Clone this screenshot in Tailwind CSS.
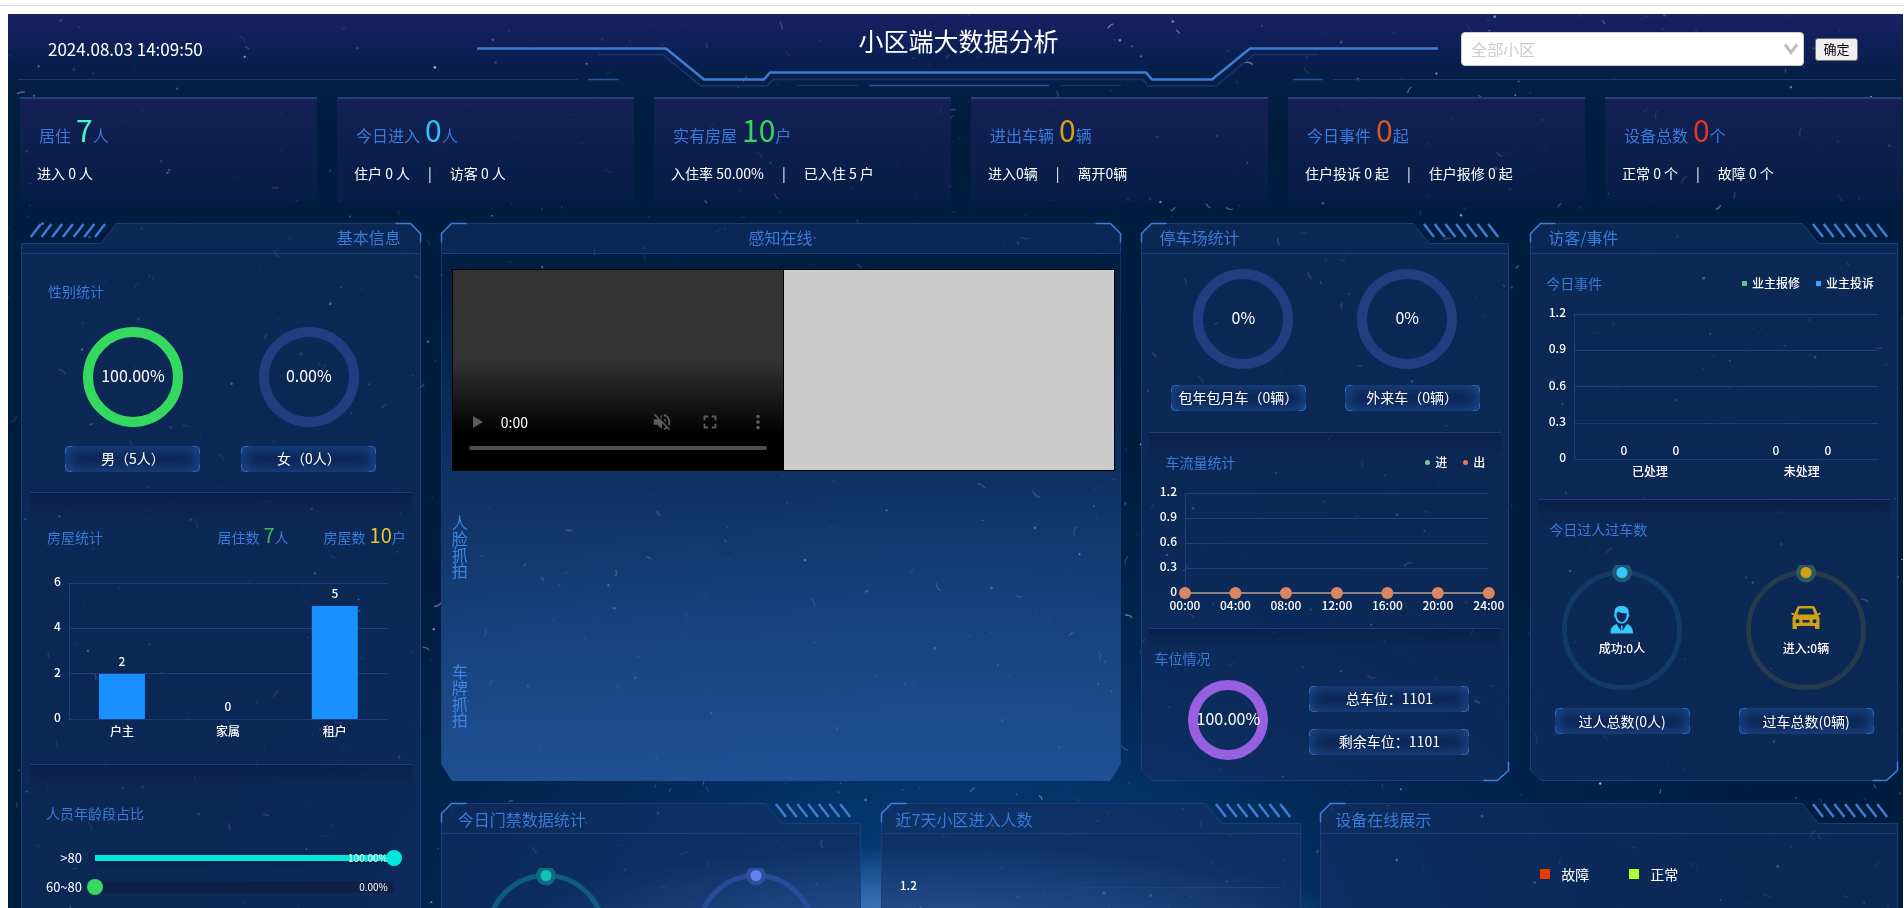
<!DOCTYPE html>
<html lang="zh-CN">
<head>
<meta charset="utf-8">
<title>小区端大数据分析</title>
<script src="https://cdn.jsdelivr.net/npm/@tailwindcss/browser@4"></script>
</head>
<body class="bg-white">
<div class="flex h-screen flex-col overflow-hidden font-['Noto_Sans_CJK_SC',sans-serif] text-white">
<div class="mb-2 h-[6px] shrink-0 border-b border-[#dddddd]"></div>
<main class="relative isolate mr-px ml-2 flex-1 overflow-hidden bg-[#001d40] bg-[radial-gradient(ellipse_22%_9%_at_49%_102%,#4a86c4_0%,#2f68ad_40%,transparent_100%),radial-gradient(ellipse_42%_55%_at_51%_105%,#05468a_0%,#04356a80_55%,transparent_100%),linear-gradient(to_bottom,#1a2064_0px,#10205a_25px,#061f49_60px,transparent_100px)]">
<canvas id="dust" class="absolute inset-0 -z-10 h-full w-full" aria-hidden="true"></canvas>

<header class="relative grid h-[83px] grid-cols-[1fr_auto_1fr] items-start pt-[18px]">
  <svg class="absolute inset-0 -z-10 h-[83px] w-full" viewBox="8 14 1895 83" preserveAspectRatio="none" fill="none" aria-hidden="true">
    <path d="M598 54.5H663L701 86H767L773 79.5H1143L1148 86H1216L1254 54.5H1319" stroke="#1b3570" stroke-width="1.5"/>
    <path d="M477 48.5H666L704 79.5H764L770 72.5H1146L1152 79.5H1212L1250 48.5H1438" stroke="#3f7cd3" stroke-width="2.5"/>
    <path d="M18 79.5H578M1333 79.5H1896M797 85.5H858M1060 85.5H1121" stroke="#1b3a70"/>
    <path d="M588 79.5H619M1293 79.5H1323M869 85.5H1049" stroke="#2b52a0" stroke-width="1.5"/>
  </svg>
  <time class="pl-10 text-[17px] leading-[34px]">2024.08.03 14:09:50</time>
  <h1 class="pl-[6px] text-[25px] leading-4">小区端大数据分析</h1>
  <div class="flex items-center justify-end gap-[11px] pr-[45px]">
    <label class="relative block w-[343px]">
      <span class="sr-only">小区</span>
      <select class="h-[34px] w-full appearance-none rounded border border-[#cccccc] bg-white pl-[9px] text-base leading-none text-[#cccccc]"><option>全部小区</option></select>
      <svg class="pointer-events-none absolute top-[10px] right-[5px] h-[14px] w-[16px]" viewBox="0 0 16 14" fill="none" stroke="#bdbdbd" stroke-width="3" aria-hidden="true"><path d="M2 2.500L8 10.500L14 2.500"/></svg>
    </label>
    <button class="h-[23px] w-[43px] rounded-[3px] border border-[#767676] bg-[#efefef] text-[13px] leading-5 text-black">确定</button>
  </div>
</header>

<section class="grid grid-cols-6 gap-5 pr-px pl-3" aria-label="概览">
  <article class="h-[104px] border-t-2 border-[#22407c] bg-linear-to-b from-[#182158]/85 to-[#0b1f4e]/50 pt-3 pl-[17px]">
    <p class="flex items-baseline gap-[5px] pl-0.5 text-base leading-9 text-[#3b7ad6]">居住<span class="flex items-baseline"><b class="text-[30px] font-normal text-[#42f5c4]">7</b>人</span></p>
    <p class="mt-[10px] text-sm leading-5">进入 0 人</p>
  </article>
  <article class="h-[104px] border-t-2 border-[#22407c] bg-linear-to-b from-[#182158]/85 to-[#0b1f4e]/50 pt-3 pl-[17px]">
    <p class="flex items-baseline gap-[5px] pl-0.5 text-base leading-9 text-[#3b7ad6]">今日进入<span class="flex items-baseline"><b class="text-[30px] font-normal text-[#35c2fc]">0</b>人</span></p>
    <p class="mt-[10px] flex gap-[18px] text-sm leading-5"><span>住户 0 人</span><span>|</span><span>访客 0 人</span></p>
  </article>
  <article class="h-[104px] border-t-2 border-[#22407c] bg-linear-to-b from-[#182158]/85 to-[#0b1f4e]/50 pt-3 pl-[17px]">
    <p class="flex items-baseline gap-[5px] pl-0.5 text-base leading-9 text-[#3b7ad6]">实有房屋<span class="flex items-baseline"><b class="text-[30px] font-normal text-[#36d660]">10</b>户</span></p>
    <p class="mt-[10px] flex gap-[18px] text-sm leading-5"><span>入住率 50.00%</span><span>|</span><span>已入住 5 户</span></p>
  </article>
  <article class="h-[104px] border-t-2 border-[#22407c] bg-linear-to-b from-[#182158]/85 to-[#0b1f4e]/50 pt-3 pl-[17px]">
    <p class="flex items-baseline gap-[5px] pl-0.5 text-base leading-9 text-[#3b7ad6]">进出车辆<span class="flex items-baseline"><b class="text-[30px] font-normal text-[#d0a120]">0</b>辆</span></p>
    <p class="mt-[10px] flex gap-[18px] text-sm leading-5"><span>进入0辆</span><span>|</span><span>离开0辆</span></p>
  </article>
  <article class="h-[104px] border-t-2 border-[#22407c] bg-linear-to-b from-[#182158]/85 to-[#0b1f4e]/50 pt-3 pl-[17px]">
    <p class="flex items-baseline gap-[5px] pl-0.5 text-base leading-9 text-[#3b7ad6]">今日事件<span class="flex items-baseline"><b class="text-[30px] font-normal text-[#cf5a26]">0</b>起</span></p>
    <p class="mt-[10px] flex gap-[18px] text-sm leading-5"><span>住户投诉 0 起</span><span>|</span><span>住户报修 0 起</span></p>
  </article>
  <article class="h-[104px] border-t-2 border-[#22407c] bg-linear-to-b from-[#182158]/85 to-[#0b1f4e]/50 pt-3 pl-[17px]">
    <p class="flex items-baseline gap-[5px] pl-0.5 text-base leading-9 text-[#3b7ad6]">设备总数<span class="flex items-baseline"><b class="text-[30px] font-normal text-[#e23620]">0</b>个</span></p>
    <p class="mt-[10px] flex gap-[18px] text-sm leading-5"><span>正常 0 个</span><span>|</span><span>故障 0 个</span></p>
  </article>
</section>

<div class="mt-[22px] grid grid-cols-[400fr_1458fr] gap-5 pr-[5px] pl-[13px]">

  <section class="relative isolate pb-40" data-frame="mirror">
    <h2 class="pr-5 text-right text-base leading-7 text-[#3b7ad6]">基本信息</h2>
    <h3 class="mt-[30px] pl-[27px] text-sm leading-5 text-[#3b7ad6]">性别统计</h3>
    <div class="mt-[26px] grid grid-cols-2 justify-items-center px-6">
      <div class="flex size-[100px] items-center justify-center rounded-full border-[10px] border-[#36d960] pb-1 text-base"><span>100.00%</span></div>
      <div class="flex size-[100px] items-center justify-center rounded-full border-[10px] border-[#243d80] pb-1 text-base"><span>0.00%</span></div>
    </div>
    <div class="mt-[19px] grid grid-cols-2 justify-items-center px-6">
      <div class="relative isolate h-[26px] w-[135px] rounded-[3px] bg-[#0b2452] text-center text-sm leading-6 shadow-[inset_0_0_14px_3px_#1c4a8e]" data-frame="chip">男（5人）</div>
      <div class="relative isolate h-[26px] w-[135px] rounded-[3px] bg-[#0b2452] text-center text-sm leading-6 shadow-[inset_0_0_14px_3px_#1c4a8e]" data-frame="chip">女（0人）</div>
    </div>

    <div class="mx-[9px] mt-5 -mb-6 h-6 border-t border-[#223d82] bg-linear-to-b from-[#08193c]/50 to-transparent"></div>
    <div class="flex items-end pt-[33px] pr-[15px] pl-[26px] text-sm leading-5 text-[#3b7ad6]">
      <h3 class="mr-auto">房屋统计</h3>
      <p class="flex items-baseline gap-1">居住数<span class="flex items-baseline"><b class="text-xl leading-5 font-normal text-[#38c060]">7</b>人</span></p>
      <p class="ml-[35px] flex items-baseline gap-1">房屋数<span class="flex items-baseline"><b class="text-xl leading-5 font-normal text-[#efc32b]">10</b>户</span></p>
    </div>
    <svg class="mt-[13px] block h-[185px] w-full font-medium" viewBox="21 560 400 185" font-size="12" fill="#ffffff">
      <path d="M69 583.500H388M69 628.500H388M69 673.500H388M69 719.500H388M69.500 583V719M122.500 719V724M228.500 719V724M335.500 719V724" stroke="#243d80" fill="none"/>
      <path d="M99 674H145V719H99ZM312 606H358V719H312Z" fill="#1890ff"/>
      <g text-anchor="end"><text x="61" y="586">6</text><text x="61" y="631">4</text><text x="61" y="677">2</text><text x="61" y="722">0</text></g>
      <g text-anchor="middle"><text x="122" y="666">2</text><text x="228" y="711">0</text><text x="335" y="598">5</text><text x="122" y="736">户主</text><text x="228" y="736">家属</text><text x="335" y="736">租户</text></g>
    </svg>

    <div class="mx-[9px] mt-[19px] -mb-6 h-6 border-t border-[#223d82] bg-linear-to-b from-[#08193c]/50 to-transparent"></div>
    <h3 class="pt-[39px] pl-[25px] text-sm leading-5 text-[#3b7ad6]">人员年龄段占比</h3>
    <ul class="mt-5">
      <li class="flex h-[29px] items-center pr-[27px]">
        <span class="w-[61px] text-right text-[13px] leading-5">&gt;80</span>
        <div class="relative ml-[13px] flex h-[6px] flex-1 items-center bg-[#00e8dc] shadow-[0_0_5px_#061a38]">
          <span class="absolute right-[6px] text-[10px] leading-3">100.00%</span>
          <span class="absolute -right-2 size-4 rounded-full bg-[#00e8dc]"></span>
        </div>
      </li>
      <li class="flex h-[29px] items-center pr-[27px]">
        <span class="w-[61px] text-right text-[13px] leading-5">60~80</span>
        <div class="relative ml-[13px] flex h-3 flex-1 items-center rounded bg-[#0f2148]">
          <span class="absolute right-[6px] text-[10px] leading-3">0.00%</span>
          <span class="absolute -left-2 size-4 rounded-full bg-[#36d960]"></span>
        </div>
      </li>
    </ul>
  </section>

  <div class="flex flex-col gap-[22px]">
    <div class="grid grid-cols-[680fr_368fr_368fr] gap-[21px]">

      <section class="relative isolate" data-frame="center">
        <h2 class="text-center text-base leading-7 text-[#3b7ad6]">感知在线</h2>
        <div class="mt-[18px] mr-[5px] ml-[11px] grid h-[202px] grid-cols-2 gap-px border border-black bg-black">
          <div class="flex flex-col justify-end bg-[#333333] bg-linear-to-t from-black from-18% to-transparent to-55% px-4 pb-5 text-[#5c5c5c]">
            <div class="flex items-center text-sm leading-5 text-white">
              <button class="text-[#5c5c5c]" aria-label="播放"><svg class="block size-5" viewBox="0 0 20 20" fill="currentColor"><path d="M4 4V16L14 10Z"/></svg></button>
              <span class="mr-auto ml-3">0:00</span>
              <button class="text-[#5c5c5c]" aria-label="静音"><svg class="block size-[22px]" viewBox="0 0 24 24" fill="currentColor"><path d="M16.500 12c0-1.770-1.020-3.290-2.500-4.030v2.210l2.450 2.450c.03-.2.05-.41.05-.63zm2.500 0c0 .94-.2 1.820-.54 2.640l1.510 1.510C20.630 14.910 21 13.500 21 12c0-4.280-2.990-7.860-7-8.770v2.060c2.890.86 5 3.540 5 6.710zM4.270 3L3 4.270 7.730 9H3v6h4l5 5v-6.730l4.250 4.250c-.67.52-1.420.93-2.250 1.180v2.060c1.380-.31 2.630-.95 3.690-1.810L19.730 21 21 19.730l-9-9L4.270 3zM12 4L9.910 6.090 12 8.180V4z"/></svg></button>
              <button class="ml-[26px] text-[#5c5c5c]" aria-label="全屏"><svg class="block size-[22px]" viewBox="0 0 24 24" fill="currentColor"><path d="M7 14H5v5h5v-2H7v-3zm-2-4h2V7h3V5H5v5zm12 7h-3v2h5v-5h-2v3zM14 5v2h3v3h2V5h-5z"/></svg></button>
              <button class="-mr-0.5 ml-[26px] text-[#5c5c5c]" aria-label="更多"><svg class="block size-[22px]" viewBox="0 0 24 24" fill="currentColor"><path d="M12 8c1.100 0 2-.9 2-2s-.9-2-2-2-2 .9-2 2 .9 2 2 2zm0 2c-1.100 0-2 .9-2 2s.9 2 2 2 2-.9 2-2-.9-2-2-2zm0 6c-1.100 0-2 .9-2 2s.9 2 2 2 2-.9 2-2-.9-2-2-2z"/></svg></button>
            </div>
            <div class="mt-[13px] h-1 rounded-full bg-[#4f4f4f]"></div>
          </div>
          <div class="bg-[#cccccc]"></div>
        </div>
        <div class="mt-[43px] flex flex-col gap-[85px] pb-[54px] pl-[11px] text-base leading-4 text-[#4384e0]">
          <h3 class="w-4">人脸抓拍</h3>
          <h3 class="w-4">车牌抓拍</h3>
        </div>
      </section>

      <section class="relative isolate" data-frame="full">
        <h2 class="pl-[18px] text-base leading-7 text-[#3b7ad6]">停车场统计</h2>
        <div class="mt-[18px] grid grid-cols-2 justify-items-center px-5">
          <div class="flex size-[100px] items-center justify-center rounded-full border-[10px] border-[#243d80] pb-1 text-base">0%</div>
          <div class="flex size-[100px] items-center justify-center rounded-full border-[10px] border-[#243d80] pb-1 text-base">0%</div>
        </div>
        <div class="mt-4 grid grid-cols-2 justify-items-center px-[10px]">
          <div class="relative isolate h-[26px] w-[135px] rounded-[3px] bg-[#0b2452] text-center text-sm leading-6 shadow-[inset_0_0_14px_3px_#1c4a8e]" data-frame="chip">包年包月车（0辆）</div>
          <div class="relative isolate h-[26px] w-[135px] rounded-[3px] bg-[#0b2452] text-center text-sm leading-6 shadow-[inset_0_0_14px_3px_#1c4a8e]" data-frame="chip">外来车（0辆）</div>
        </div>
        <div class="mx-2 mt-[21px] -mb-6 h-6 border-t border-[#223d82] bg-linear-to-b from-[#08193c]/50 to-transparent"></div>
        <div class="flex items-center pt-5 pr-6 pl-6">
          <h3 class="mr-auto text-sm leading-5 text-[#3b7ad6]">车流量统计</h3>
          <span class="flex items-center gap-[5px] text-xs font-medium"><i class="size-[5px] rounded-full bg-[#7cc6a4]"></i>进</span>
          <span class="ml-4 flex items-center gap-[5px] text-xs font-medium"><i class="size-[5px] rounded-full bg-[#d88060]"></i>出</span>
        </div>
        <svg class="mt-[6px] block h-[140px] w-full font-medium" viewBox="1142 478 368 140" font-size="12" fill="#ffffff">
          <path d="M1186 493.500H1490M1186 518.500H1490M1186 543.500H1490M1186 568.500H1490M1186.500 493V593" stroke="#243d80" fill="none"/>
          <path d="M1186 593H1490" stroke="#8a8284" stroke-width="2"/>
          <g fill="#d98762"><circle cx="1186" cy="593" r="6"/><circle cx="1236.500" cy="593" r="6"/><circle cx="1287" cy="593" r="6"/><circle cx="1338" cy="593" r="6"/><circle cx="1388.500" cy="593" r="6"/><circle cx="1439" cy="593" r="6"/><circle cx="1490" cy="593" r="6"/></g>
          <g text-anchor="end"><text x="1178" y="496">1.2</text><text x="1178" y="521">0.9</text><text x="1178" y="546">0.6</text><text x="1178" y="571">0.3</text><text x="1178" y="596">0</text></g>
          <g text-anchor="middle"><text x="1186" y="610">00:00</text><text x="1236.500" y="610">04:00</text><text x="1287" y="610">08:00</text><text x="1338" y="610">12:00</text><text x="1388.500" y="610">16:00</text><text x="1439" y="610">20:00</text><text x="1490" y="610">24:00</text></g>
        </svg>
        <div class="mx-2 mt-[10px] -mb-6 h-6 border-t border-[#223d82] bg-linear-to-b from-[#08193c]/50 to-transparent"></div>
        <h3 class="pt-5 pl-[13px] text-sm leading-5 text-[#3b7ad6]">车位情况</h3>
        <div class="mt-3 flex items-center gap-[41px] pl-[47px]">
          <div class="flex size-20 items-center justify-center rounded-full border-[10px] border-[#9760e0] pb-1 text-base"><span>100.00%</span></div>
          <div class="flex flex-col gap-[17px]">
            <div class="relative isolate h-[26px] w-40 rounded-[3px] bg-[#0b2452] text-center text-sm leading-6 shadow-[inset_0_0_14px_3px_#1c4a8e]" data-frame="chip">总车位：1101</div>
            <div class="relative isolate h-[26px] w-40 rounded-[3px] bg-[#0b2452] text-center text-sm leading-6 shadow-[inset_0_0_14px_3px_#1c4a8e]" data-frame="chip">剩余车位：1101</div>
          </div>
        </div>
      </section>

      <section class="relative isolate" data-frame="full">
        <h2 class="pl-[18px] text-base leading-7 text-[#3b7ad6]">访客/事件</h2>
        <div class="mt-[22px] flex items-center pr-6 pl-4">
          <h3 class="mr-auto text-sm leading-5 text-[#3b7ad6]">今日事件</h3>
          <span class="flex items-center gap-[5px] text-xs font-medium"><i class="size-[5px] bg-[#5cc488]"></i>业主报修</span>
          <span class="ml-4 flex items-center gap-[5px] text-xs font-medium"><i class="size-[5px] bg-[#3ea0ff]"></i>业主投诉</span>
        </div>
        <svg class="mt-[7px] block h-[185px] w-full font-medium" viewBox="1531 300 368 185" font-size="12" fill="#ffffff">
          <path d="M1575 314.500H1879M1575 350.500H1879M1575 386.500H1879M1575 423.500H1879M1575 459.500H1879M1575.500 314V459" stroke="#243d80" fill="none"/>
          <g text-anchor="end"><text x="1567" y="317">1.2</text><text x="1567" y="353">0.9</text><text x="1567" y="390">0.6</text><text x="1567" y="426">0.3</text><text x="1567" y="462">0</text></g>
          <g text-anchor="middle"><text x="1625" y="455">0</text><text x="1677" y="455">0</text><text x="1777" y="455">0</text><text x="1829" y="455">0</text><text x="1651" y="476">已处理</text><text x="1803" y="476">未处理</text></g>
        </svg>
        <div class="mx-2 mt-[14px] -mb-6 h-6 border-t border-[#223d82] bg-linear-to-b from-[#08193c]/50 to-transparent"></div>
        <h3 class="pt-5 pl-[19px] text-sm leading-5 text-[#3b7ad6]">今日过人过车数</h3>
        <div class="mt-[26px] grid grid-cols-2 justify-items-center">
          <svg class="block h-[125px] w-[120px] font-medium" viewBox="0 0 120 125" font-size="12">
            <circle cx="60" cy="65" r="57.500" fill="none" stroke="#123c66" stroke-width="5"/>
            <circle cx="60" cy="7.500" r="10" fill="#1e5874"/><circle cx="60" cy="7.500" r="5.500" fill="#36c8fc"/>
            <g fill="#36c8fc"><path d="M52.600 49C52 43.600 54.500 41 59.500 41C64.600 41 67.200 43.600 66.800 49C67.700 50 67.400 52 66.300 52.600C65.400 56.500 62.800 58.800 59.700 58.800C56.500 58.800 54 56.500 53.200 52.600C52 52 51.700 50 52.600 49ZM54.600 48.300C54.200 53 56.700 57 59.700 57C62.800 57 65.100 53 64.700 48.300C61 48.600 57.500 47.800 56.500 46.500Z" fill-rule="evenodd"/><path d="M48.500 68.500C48.500 63.500 50 60.800 54.500 59L59.200 66L59 60.500H60.600L60.400 66L65 59C69.500 60.800 71 63.500 71 68.500Z"/></g>
            <text x="60" y="88" text-anchor="middle" fill="#ffffff">成功:0人</text>
          </svg>
          <svg class="block h-[125px] w-[120px] font-medium" viewBox="0 0 120 125" font-size="12">
            <circle cx="60" cy="65" r="57.500" fill="none" stroke="#263b4c" stroke-width="5"/>
            <circle cx="60" cy="7.500" r="10" fill="#2e5862"/><circle cx="60" cy="7.500" r="5.500" fill="#cfa116"/>
            <path fill="#cfa116" fill-rule="evenodd" d="M51 42.500C51.500 41.500 52.300 41 53.500 41H66.500C67.700 41 68.500 41.500 69 42.500L71.500 48.500L74.500 47.500V49.500L72 50.500C73.300 51.500 73.500 52.500 73.500 54V64H69V61H51V64H46.500V54C46.500 52.500 46.700 51.500 48 50.500L45.500 49.500V47.500L48.500 48.500ZM53.500 43.500L51.500 49.500H68.500L66.500 43.500ZM51.500 54.200A2 2 0 1 0 51.500 58.200A2 2 0 1 0 51.500 54.200ZM68.500 54.200A2 2 0 1 0 68.500 58.200A2 2 0 1 0 68.500 54.200ZM56.500 55H63.500V57.500H56.500Z"/>
            <text x="60" y="88" text-anchor="middle" fill="#ffffff">进入:0辆</text>
          </svg>
        </div>
        <div class="mt-[18px] grid grid-cols-2 justify-items-center pb-[46px]">
          <div class="relative isolate h-[26px] w-[135px] rounded-[3px] bg-[#0b2452] text-center text-sm leading-[26px] shadow-[inset_0_0_14px_3px_#1c4a8e]" data-frame="chip">过人总数(0人)</div>
          <div class="relative isolate h-[26px] w-[135px] rounded-[3px] bg-[#0b2452] text-center text-sm leading-[26px] shadow-[inset_0_0_14px_3px_#1c4a8e]" data-frame="chip">过车总数(0辆)</div>
        </div>
      </section>
    </div>

    <div class="grid grid-cols-[420fr_420fr_578fr] gap-5">
      <section class="relative isolate pb-16" data-frame="full">
        <h2 class="pt-px pl-[17px] text-base leading-[30px] text-[#3b7ad6]">今日门禁数据统计</h2>
        <div class="mt-[34px] grid grid-cols-2 justify-items-center">
          <svg class="block h-[125px] w-[120px]" viewBox="0 0 120 125"><circle cx="60" cy="65" r="57.500" fill="none" stroke="#0e5c7e" stroke-width="5"/><circle cx="60" cy="7.500" r="10" fill="#0e6a80"/><circle cx="60" cy="7.500" r="5.500" fill="#14c2b8"/></svg>
          <svg class="block h-[125px] w-[120px]" viewBox="0 0 120 125"><circle cx="60" cy="65" r="57.500" fill="none" stroke="#264c98" stroke-width="5"/><circle cx="60" cy="7.500" r="10" fill="#2f4f9e"/><circle cx="60" cy="7.500" r="5.500" fill="#6283f0"/></svg>
        </div>
      </section>
      <section class="relative isolate" data-frame="full">
        <h2 class="pt-px pl-[15px] text-base leading-[30px] text-[#3b7ad6]">近7天小区进入人数</h2>
        <svg class="mt-[34px] block h-[125px] w-full font-medium" viewBox="881 868 420 125" font-size="12" fill="#ffffff">
          <path d="M925 887.500H1280M925.500 887V993M925 923.500H1280M925 959.500H1280" stroke="#23417f" fill="none"/>
          <text x="917" y="890" text-anchor="end">1.2</text>
        </svg>
      </section>
      <section class="relative isolate" data-frame="full">
        <h2 class="pt-px pl-[15px] text-base leading-[30px] text-[#3b7ad6]">设备在线展示</h2>
        <div class="mt-[30px] flex items-center justify-center gap-10 text-sm leading-5">
          <span class="flex items-center gap-[11px]"><i class="size-[10px] bg-[#e83a06]"></i>故障</span>
          <span class="flex items-center gap-[11px]"><i class="size-[10px] bg-[#adff2f]"></i>正常</span>
        </div>
      </section>
    </div>
  </div>
</div>
</main>
</div>

<script>
// Panel frames: chamfered outline, header rule, bright corners and hatch marks, redrawn on resize.
const NS = 'http://www.w3.org/2000/svg';
function path(svg, d, attrs) {
  const p = document.createElementNS(NS, 'path');
  p.setAttribute('d', d);
  for (const k in attrs) p.setAttribute(k, attrs[k]);
  svg.appendChild(p);
}
function drawFrame(el) {
  const w = Math.round(el.clientWidth) - 1, h = Math.round(el.clientHeight);
  let svg = el.querySelector(':scope > svg[data-bg]');
  if (!svg) {
    svg = document.createElementNS(NS, 'svg');
    svg.setAttribute('data-bg', '');
    svg.setAttribute('aria-hidden', 'true');
    svg.setAttribute('style', 'position:absolute;left:0;top:0;z-index:-1;overflow:visible');
    el.prepend(svg);
  }
  svg.setAttribute('width', w + 1);
  svg.setAttribute('height', h);
  svg.replaceChildren();
  const kind = el.dataset.frame;
  const line = { fill: 'none', stroke: '#1f3c7c', 'stroke-width': 1, transform: 'translate(.5 .5)' };
  const hi = { fill: 'none', stroke: '#3f80dc', 'stroke-width': 1.5, transform: 'translate(.5 .5)' };
  if (kind === 'chip') {
    const c = h - 1;
    path(svg, `M0 7V3L3 0H7M${w - 7} 0H${w - 3}L${w} 3V7M${w} ${c - 7}V${c - 3}L${w - 3} ${c}H${w - 7}M7 ${c}H3L0 ${c - 3}V${c - 7}`, { fill: 'none', stroke: '#2f66b4', transform: 'translate(.5 .5)' });
    return;
  }
  if (kind === 'center') {
    const g = document.createElementNS(NS, 'linearGradient');
    g.id = 'stage';
    g.setAttribute('x1', 0); g.setAttribute('x2', 0); g.setAttribute('y1', 0); g.setAttribute('y2', 1);
    for (const [o, a] of [[0, 0.02], [0.45, 0.42], [1, 0.95]]) {
      const s = document.createElementNS(NS, 'stop');
      s.setAttribute('offset', o); s.setAttribute('stop-color', '#215298'); s.setAttribute('stop-opacity', a);
      g.appendChild(s);
    }
    svg.appendChild(g);
    path(svg, `M0 31H${w + 1}V${h - 17}L${w - 10} ${h}H11L0 ${h - 17}Z`, { fill: 'url(#stage)' });
    path(svg, `M0 10L10 0H${w - 10}L${w} 10V30H0Z`, { ...line, fill: '#0e2b5e', 'fill-opacity': 0.75 });
    path(svg, `M0 31V${h - 17}M${w} 31V${h - 17}`, { ...line, 'stroke-opacity': 0.6 });
    path(svg, `M0 19V10L10 0H25M${w - 25} 0H${w - 10}L${w} 10V19`, hi);
    return;
  }
  const x = kind === 'mirror' ? v => w - v : v => v;
  const b = h - 1;
  const outline = `M${x(0)} 10L${x(10)} 0H${x(w - 95)}L${x(w - 79)} 20H${x(w)}V${b - 10}L${x(w - 11)} ${b}H${x(11)}L${x(0)} ${b - 10}Z`;
  path(svg, outline, { ...line, fill: '#132e62', 'fill-opacity': 0.62 });
  path(svg, `M${x(0)} 30H${x(w)}`, line);
  path(svg, `M${x(0)} 19V10L${x(10)} 0H${x(25)}M${x(w - 25)} ${b}H${x(w - 11)}L${x(w)} ${b - 10}V${b - 19}`, hi);
  let d = '';
  for (let i = 0; i < 7; i++) {
    const s = w - 84 + i * 10.7;
    d += `M${x(s)} 1L${x(s + 10)} 14`;
  }
  path(svg, d, { fill: 'none', stroke: '#3f7cd3', 'stroke-width': 2.5 });
}
const ro = new ResizeObserver(list => list.forEach(e => drawFrame(e.target)));
document.querySelectorAll('[data-frame]').forEach(el => { drawFrame(el); ro.observe(el); });

// Dust on the backdrop, laid out with a fixed seed and repainted at the canvas's real size.
function drawDust() {
  const cv = document.getElementById('dust');
  cv.width = cv.clientWidth;
  cv.height = cv.clientHeight;
  const ctx = cv.getContext('2d');
  let seed = 11;
  const rnd = () => (seed = (seed * 16807) % 2147483647) / 2147483647;
  for (let i = 0; i < 1100; i++) {
    const px = rnd() * cv.width, py = rnd() * cv.height, a = rnd();
    if (i % 3) {
      ctx.fillStyle = `rgba(160,185,240,${0.1 + a * a * a * a * 0.9})`;
      ctx.beginPath(); ctx.arc(px, py, 0.7 + rnd() * 0.8, 0, 7); ctx.fill();
    } else {
      const t = rnd() * 6;
      ctx.strokeStyle = `rgba(200,160,190,${0.1 + a * a * 0.5})`;
      ctx.lineWidth = 1.4;
      ctx.beginPath(); ctx.arc(px, py, 3 + rnd() * 7, t, t + 1); ctx.stroke();
    }
  }
}
new ResizeObserver(drawDust).observe(document.getElementById('dust'));
</script>
</body>
</html>
